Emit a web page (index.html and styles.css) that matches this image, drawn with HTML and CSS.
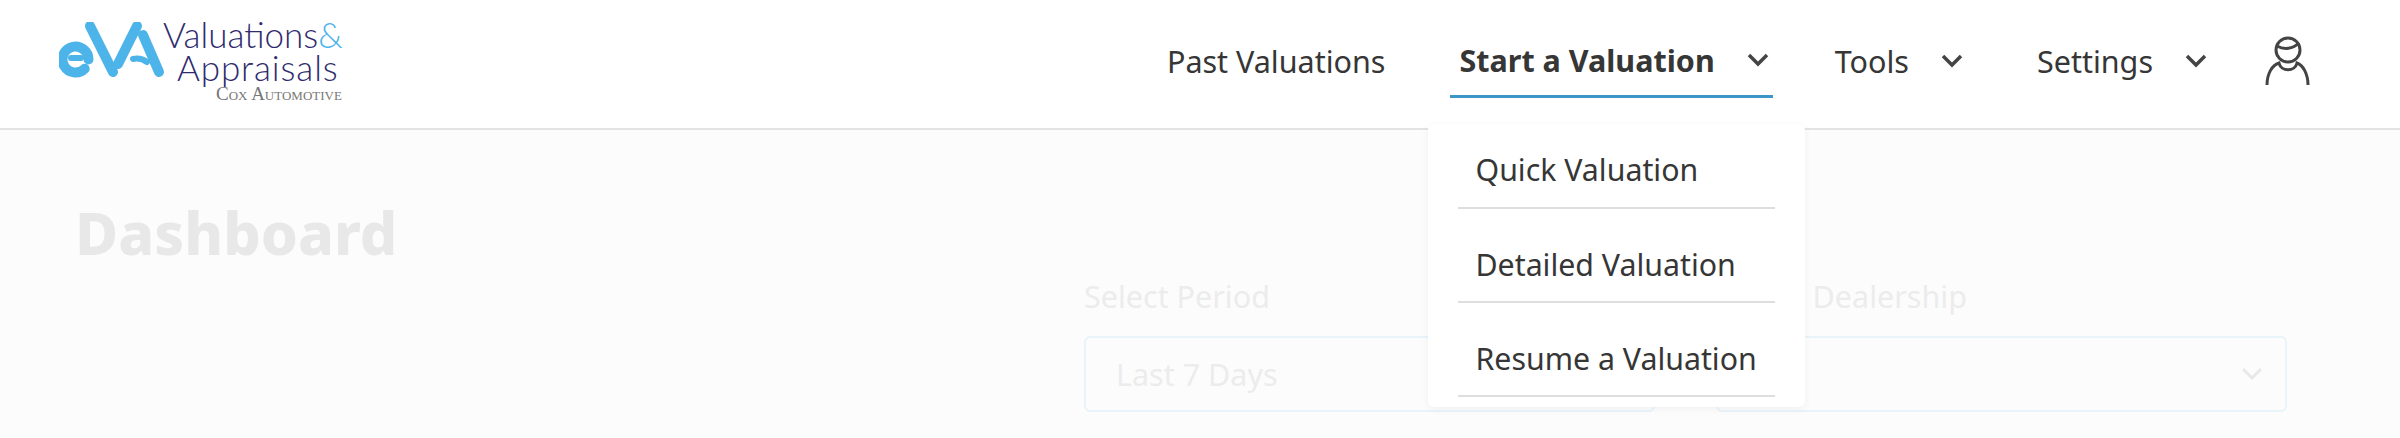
FILE: index.html
```html
<!DOCTYPE html>
<html lang="en">

<head>
    <meta charset="UTF-8">
    <title>Dashboard</title>
    <link rel="stylesheet" href="styles.css">
</head>

<body>
    <header class="topbar">
        <a class="logo">
            <svg class="logo-mark" width="110" height="60" viewBox="0 0 110 60">
                <path class="mark-thin" d="M12 36h10" />
                <path class="mark" d="M25.700 46.700A13 13 0 1 1 29.500 37.500" />
                <path class="mark" d="M31 4L54 50" />
                <path class="mark" d="M59 42L78 4" />
                <path class="mark" d="M84 13L100 50" />
                <path class="mark-thin" d="M74 37c5-1 10 0 14 3" />
            </svg>
            <div class="logo-text">
                <div class="logo-line">Valuations<span class="amp">&amp;</span></div>
                <div class="logo-line second">Appraisals</div>
                <div class="logo-cox">Cox Automotive</div>
            </div>
        </a>
        <nav class="nav">
            <a class="nav-item past">Past Valuations</a>
            <div class="nav-item active">
                <span>Start a Valuation</span>
                <svg class="chev" viewBox="0 0 24 14"><path d="M3 2l9 9l9-9" /></svg>
                <div class="dropdown">
                    <a class="drop-link">Quick Valuation</a>
                    <a class="drop-link">Detailed Valuation</a>
                    <a class="drop-link">Resume a Valuation</a>
                </div>
            </div>
            <div class="nav-item tools">
                <span>Tools</span>
                <svg class="chev" viewBox="0 0 24 14"><path d="M3 2l9 9l9-9" /></svg>
            </div>
            <div class="nav-item settings">
                <span>Settings</span>
                <svg class="chev" viewBox="0 0 24 14"><path d="M3 2l9 9l9-9" /></svg>
            </div>
            <svg class="user" width="50" height="52" viewBox="0 0 50 52">
                <circle cx="26" cy="15" r="12" />
                <path d="M15 11c7 4 16 3 22-3" />
                <path d="M5 50c0-11 5-20 12-22c2 9 16 9 18 0c6 2 11 11 11 22" />
            </svg>
        </nav>
    </header>

    <main class="content">
        <h1 class="title">Dashboard</h1>
        <div class="filters">
            <div class="field">
                <label>Select Period</label>
                <div class="select">Last 7 Days</div>
            </div>
            <div class="field">
                <label>Select Dealership</label>
                <div class="select">
                    <span></span>
                    <svg class="select-chev" viewBox="0 0 24 14"><path d="M3 2l9 9l9-9" /></svg>
                </div>
            </div>
        </div>
    </main>
</body>

</html>
```

FILE: styles.css
```css
html,
body {
    margin: 0;
    height: 438px;
    overflow: hidden;
}

body {
    font-family: "Noto Sans", "Lato", sans-serif;
    background-color: #fcfcfc;
    color: #363636;
}

.topbar {
    display: flex;
    justify-content: space-between;
    height: 128px;
    padding-left: 59px;
    background-color: #fff;
    border-bottom: 2px solid #e3e3e3;
}

.logo {
    display: flex;
    align-items: flex-start;
}

.logo-mark {
    margin-top: 22px;
    flex: none;
}

.mark {
    fill: none;
    stroke: #4db4ea;
    stroke-width: 10;
    stroke-linecap: round;
    stroke-linejoin: round;
}

.mark-thin {
    fill: none;
    stroke: #4db4ea;
    stroke-width: 6;
    stroke-linecap: round;
}

.logo-text {
    margin-top: 18px;
    margin-left: -6px;
    font-family: "Lato", sans-serif;
    color: #2f2b6e;
    font-weight: 300;
    font-size: 35px;
    line-height: 33px;
}

.logo-line.second {
    padding-left: 14px;
    letter-spacing: 0.9px;
}

.amp {
    color: #4db4ea;
}

.logo-cox {
    padding-left: 53px;
    font-family: "Liberation Serif", serif;
    font-variant: small-caps;
    font-size: 19px;
    line-height: 20px;
    color: #777;
}

.nav {
    display: flex;
    align-items: flex-start;
    padding-right: 88px;
    font-size: 30.500px;
}

.nav-item {
    display: flex;
    align-items: center;
    height: 98px;
    box-sizing: border-box;
    position: relative;
    padding-top: 24px;
}

.past {
    margin-right: 65px;
}

.active {
    font-weight: 700;
    padding-left: 9px;
    padding-right: 3px;
    border-bottom: 3px solid #3d96c8;
    margin-right: 62px;
}

.tools {
    margin-right: 73px;
}

.settings {
    margin-right: 54px;
}

.chev {
    width: 24px;
    height: 14px;
    margin-left: 31px;
    fill: none;
    stroke: #444;
    stroke-width: 3.500;
}

.user {
    margin-top: 35px;
    fill: none;
    stroke: #444;
    stroke-width: 3;
}

.dropdown {
    position: absolute;
    top: 124px;
    left: -22px;
    width: 377px;
    box-sizing: border-box;
    padding: 0 30px 10px;
    background-color: #fff;
    border-radius: 6px;
    box-shadow: 0 2px 8px rgba(0, 0, 0, 0.05);
    font-weight: 400;
    font-size: 30.300px;
}

.drop-link {
    display: block;
    padding: 32px 0 12px 17px;
    line-height: 48px;
    border-bottom: 2px solid #dedede;
    white-space: nowrap;
}

.drop-link:first-child {
    padding-top: 22px;
    padding-bottom: 13px;
}

.content {
    padding: 0 113px 0 75px;
}

.title {
    margin: 70px 0 0;
    font-size: 59px;
    line-height: 64px;
    font-weight: 800;
    color: #e8e8e8;
}

.filters {
    display: flex;
    justify-content: flex-end;
    gap: 61px;
    margin-top: 12px;
}

.field {
    width: 571px;
}

.field label {
    display: block;
    font-size: 30.500px;
    line-height: 40px;
    color: #ececec;
}

.field + .field label {
    padding-left: 4px;
}

.select {
    display: flex;
    align-items: center;
    justify-content: space-between;
    box-sizing: border-box;
    height: 76px;
    margin-top: 20px;
    padding: 0 21px 0 30px;
    border: 2px solid #e8f4f9;
    border-radius: 6px;
    font-size: 30.500px;
    color: #ececec;
}

.select-chev {
    width: 24px;
    height: 14px;
    fill: none;
    stroke: #e8e8e8;
    stroke-width: 3;
}
```
